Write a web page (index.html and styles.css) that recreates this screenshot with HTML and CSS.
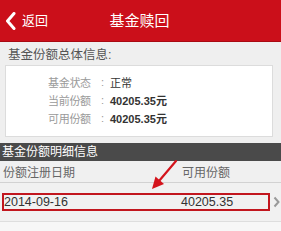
FILE: index.html
```html
<!DOCTYPE html>
<html lang="zh-CN">
<head>
<meta charset="utf-8">
<title>基金赎回</title>
<link rel="stylesheet" href="styles.css">
</head>
<body>
<div class="page">
  <header class="topbar">
    <div class="back">
      <svg class="back-icon" width="12" height="18" viewBox="0 0 12 18"><polyline points="9,1.5 2.5,9 9,16.5" fill="none" stroke="#fff" stroke-width="3" stroke-linecap="round" stroke-linejoin="round"/></svg>
      <span>返回</span>
    </div>
    <div class="title">基金赎回</div>
    <div class="spacer"></div>
  </header>

  <div class="sec-title">基金份额总体信息:</div>
  <div class="box">
    <div class="kv"><span class="k">基金状态</span><span class="c">:</span><span class="v">正常</span></div>
    <div class="kv"><span class="k">当前份额</span><span class="c">:</span><span class="v num">40205.35元</span></div>
    <div class="kv"><span class="k">可用份额</span><span class="c">:</span><span class="v num">40205.35元</span></div>
  </div>

  <div class="band">基金份额明细信息</div>
  <div class="cols">
    <span>份额注册日期</span>
    <span>可用份额</span>
  </div>
  <div class="row">
    <div class="mark">
      <span>2014-09-16</span>
      <span>40205.35</span>
    </div>
    <svg class="chev" width="7" height="12" viewBox="0 0 7 12"><polyline points="1.5,1.5 5.5,6 1.5,10.5" fill="none" stroke="#9a9a9a" stroke-width="2"/></svg>
  </div>
  <div class="rest"></div>

  <svg class="arrow" width="40" height="40" viewBox="0 0 40 40">
    <line x1="34" y1="1" x2="17" y2="21" stroke="#d4141c" stroke-width="2.2" stroke-linecap="round"/>
    <polygon points="10,29 13.5,16.5 22,24" fill="#d4141c"/>
  </svg>
</div>
</body>
</html>
```
FILE: styles.css
```css
* { box-sizing: border-box; }
html, body { margin: 0; padding: 0; }
body {
  background: #efefef;
  font-family: "Liberation Sans", "Noto Sans CJK SC", sans-serif;
  width: 281px;
  height: 231px;
  overflow: hidden;
}
.page {
  position: relative;
  width: 281px;
  height: 231px;
  display: flex;
  flex-direction: column;
}
.topbar {
  height: 42px;
  background: #cb0f1a;
  border-bottom: 1px solid #a80a12;
  display: grid;
  grid-template-columns: 1fr auto 1fr;
  align-items: center;
  color: #fff;
}
.back {
  display: flex;
  align-items: center;
  gap: 5px;
  padding-left: 5px;
  font-size: 13px;
  line-height: 16px;
}
.back-icon { display: block; }
.title {
  font-size: 15px;
  line-height: 18px;
  padding-right: 2px;
}
.sec-title {
  height: 23px;
  padding: 5px 0 0 8px;
  font-size: 12.5px;
  line-height: 16px;
  color: #555;
}
.box {
  margin: 0 8px 0 5px;
  background: #fff;
  border: 1px solid #dcdcdc;
  padding: 7px 0 9px 0;
  display: flex;
  flex-direction: column;
}
.kv {
  height: 18px;
  display: flex;
  align-items: center;
  padding-left: 42px;
}
.k {
  width: 47px;
  font-size: 11px;
  color: #9a9a9a;
  letter-spacing: -0.3px;
}
.c {
  width: 15px;
  text-align: center;
  font-size: 11px;
  color: #9a9a9a;
}
.v {
  font-size: 11px;
  color: #333;
}
.num { font-weight: bold; }
.band {
  margin-top: 6px;
  height: 18px;
  background: #4a4a4a;
  color: #fff;
  font-size: 12px;
  line-height: 18px;
  padding-left: 2px;
}
.cols {
  height: 22px;
  display: grid;
  grid-template-columns: 179px 1fr;
  align-items: center;
  padding-left: 3px;
  font-size: 12px;
  color: #666;
  border-bottom: 1px solid #d2d2d2;
  background: #f0f0f0;
}
.row {
  height: 39px;
  display: flex;
  align-items: center;
  padding-left: 2px;
  gap: 3px;
  background: #f1f1f1;
  border-bottom: 1px solid #dedede;
}
.mark {
  width: 268px;
  height: 18px;
  border: 2px solid #c2161e;
  display: grid;
  grid-template-columns: 177px 1fr;
  align-items: center;
  font-size: 12.5px;
  color: #333;
  line-height: 14px;
}
.chev { display: block; }
.rest {
  flex: 1;
  background: #f7f7f7;
}
.arrow {
  position: absolute;
  left: 142px;
  top: 160px;
}
```
